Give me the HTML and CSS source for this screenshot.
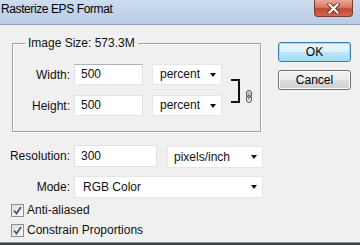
FILE: index.html
```html
<!DOCTYPE html>
<html lang="en">
<head>
    <meta charset="UTF-8">
    <title>Rasterize EPS Format</title>
    <link rel="stylesheet" href="styles.css">
</head>
<body>
    <div class="window">
        <div class="titlebar">
            <span class="title">Rasterize EPS Format</span>
            <span class="close">
                <svg width="13" height="11" viewBox="0 0 13 11">
                    <path d="M2.5 1.5 L10.5 9.5 M10.5 1.5 L2.5 9.5" stroke="#6b2a22" stroke-width="4" stroke-linecap="square"/>
                    <path d="M2.5 1.5 L10.5 9.5 M10.5 1.5 L2.5 9.5" stroke="#fff" stroke-width="2.2" stroke-linecap="square"/>
                </svg>
            </span>
        </div>

        <div class="dialog">
            <div class="main">
                <fieldset class="group">
                    <legend>Image Size: 573.3M</legend>
                    <div class="size-grid">
                        <label class="lbl">Width:</label>
                        <div class="field focused">500</div>
                        <div class="select small">percent<span class="arrow"></span></div>
                        <div class="link">
                            <span class="bracket"></span>
                            <svg class="chain" width="8" height="13" viewBox="0 0 8 13">
                                <rect x="1.5" y="0.5" width="5" height="7" rx="2.5" fill="#d8d8d8" stroke="#555"/>
                                <rect x="1.5" y="5.5" width="5" height="7" rx="2.5" fill="none" stroke="#555"/>
                                <path d="M4 3 V10" stroke="#777"/>
                            </svg>
                        </div>
                        <label class="lbl">Height:</label>
                        <div class="field">500</div>
                        <div class="select small">percent<span class="arrow"></span></div>
                    </div>
                </fieldset>

                <div class="form-row res-row">
                    <label class="lbl">Resolution:</label>
                    <div class="field res">300</div>
                    <div class="select unit">pixels/inch<span class="arrow"></span></div>
                </div>

                <div class="form-row mode-row">
                    <label class="lbl">Mode:</label>
                    <div class="select wide">RGB Color<span class="arrow"></span></div>
                </div>

                <label class="check">
                    <span class="box">
                        <svg width="9" height="9" viewBox="0 0 9 9">
                            <path d="M1 4.5 L3.5 7.5 L8 1" fill="none" stroke="#4a5a78" stroke-width="1.8"/>
                        </svg>
                    </span>
                    Anti-aliased
                </label>
                <label class="check">
                    <span class="box">
                        <svg width="9" height="9" viewBox="0 0 9 9">
                            <path d="M1 4.5 L3.5 7.5 L8 1" fill="none" stroke="#4a5a78" stroke-width="1.8"/>
                        </svg>
                    </span>
                    Constrain Proportions
                </label>
            </div>

            <div class="buttons">
                <button class="btn default">OK</button>
                <button class="btn">Cancel</button>
            </div>
        </div>

        <div class="frame-bottom"></div>
    </div>
</body>
</html>
```

FILE: styles.css
```css
body {
    margin: 0;
    font-family: "Liberation Sans", Arial, sans-serif;
    font-size: 12px;
    color: #111;
    background: #f0f0f0;
}
.window {
    width: 360px;
    height: 245px;
    display: flex;
    flex-direction: column;
    overflow: hidden;
}
.titlebar {
    height: 24px;
    border-bottom: 1px solid #8ea3bd;
    background: linear-gradient(#cddcee, #c0d2e8 60%, #b9cce3);
    display: flex;
    justify-content: space-between;
    align-items: flex-start;
}
.title {
    padding: 2px 0 0 1px;
    line-height: 14px;
    font-size: 12px;
    letter-spacing: -0.4px;
    color: #000;
}
.close {
    width: 37px;
    height: 16px;
    margin-right: 7px;
    border: 1px solid #7c3a30;
    border-top: none;
    border-radius: 0 0 4px 4px;
    background: linear-gradient(#eaa899, #d77a66 45%, #c4452f 55%, #d0694f);
    display: flex;
    align-items: center;
    justify-content: center;
}
.dialog {
    display: flex;
}
.main {
    width: 278px;
}
.group {
    box-sizing: border-box;
    width: 249px;
    margin: 11px 0 0 12px;
    padding: 14px 0 15px 0;
    border: 1px solid #a3a3a3;
    box-shadow: 1px 1px 0 #fff, inset 1px 1px 0 #fff;
}
.group legend {
    margin-left: 12px;
    padding: 0 3px;
    line-height: 14px;
}
.size-grid {
    display: grid;
    grid-template-columns: 61px 78px 79px auto;
    grid-template-rows: 21px 21px;
    row-gap: 10px;
}
.lbl {
    text-align: right;
    padding-right: 4px;
    align-self: center;
}
.field {
    box-sizing: border-box;
    height: 21px;
    padding: 0 6px;
    line-height: 19px;
    background: #fff;
    border: 1px solid #e2e2e2;
}
.size-grid .field {
    width: 69px;
}
.field.focused {
    border-color: #abb1b8 #dde1e6 #e3e7eb #dde1e6;
}
.select {
    box-sizing: border-box;
    position: relative;
    height: 21px;
    padding: 0 6px;
    line-height: 19px;
    background: #fff;
    border: 1px solid #e6e6e6;
}
.select.small {
    width: 70px;
    padding-left: 7px;
}
.arrow {
    position: absolute;
    right: 5px;
    top: 8px;
    width: 0;
    height: 0;
    border-left: 3.5px solid transparent;
    border-right: 3.5px solid transparent;
    border-top: 4px solid #111;
}
.link {
    grid-column: 4;
    grid-row: 1 / span 2;
    display: flex;
    align-items: center;
}
.bracket {
    width: 7px;
    height: 20px;
    border: 2px solid #111;
    border-left: none;
    margin-top: 1px;
}
.chain {
    margin-left: 5px;
    margin-top: 12px;
}
.form-row {
    display: flex;
    align-items: center;
}
.form-row .lbl {
    width: 70px;
}
.res-row {
    margin-top: 12px;
}
.field.res {
    width: 83px;
    height: 22px;
    line-height: 20px;
}
.select.unit {
    width: 96px;
    height: 22px;
    line-height: 20px;
    margin-left: 10px;
    margin-top: 2px;
}
.mode-row {
    margin-top: 8px;
}
.select.wide {
    width: 189px;
    height: 22px;
    line-height: 20px;
    padding-left: 8px;
}
.check {
    display: flex;
    align-items: center;
    height: 20px;
    padding-left: 11px;
}
.check:first-of-type {
    margin-top: 2px;
}
.box {
    box-sizing: border-box;
    width: 13px;
    height: 13px;
    margin-right: 3px;
    border: 1px solid #8e8f8f;
    background: linear-gradient(135deg, #dcdcdc, #fbfbfb);
    display: flex;
    align-items: center;
    justify-content: center;
}
.buttons {
    padding-top: 17px;
    display: flex;
    flex-direction: column;
    gap: 8px;
}
.btn {
    width: 73px;
    height: 20px;
    padding: 0;
    font-family: "Liberation Sans", Arial, sans-serif;
    font-size: 12px;
    color: #000;
    border: 1px solid #707070;
    border-radius: 3px;
    background: linear-gradient(#f2f2f2, #ebebeb 50%, #dddddd 50%, #cfcfcf);
    box-shadow: inset 0 0 0 1px #fcfcfc;
}
.btn.default {
    border-color: #3c7fb1;
    background: linear-gradient(#eaf6fd, #d9f0fc 50%, #bee6fd 50%, #a7d9f5);
    box-shadow: inset 0 0 0 1px #9fdcf7;
}
.frame-bottom {
    margin-top: auto;
    height: 2px;
    border-top: 1px solid #8a8f94;
    background: #3d4247;
}
```
